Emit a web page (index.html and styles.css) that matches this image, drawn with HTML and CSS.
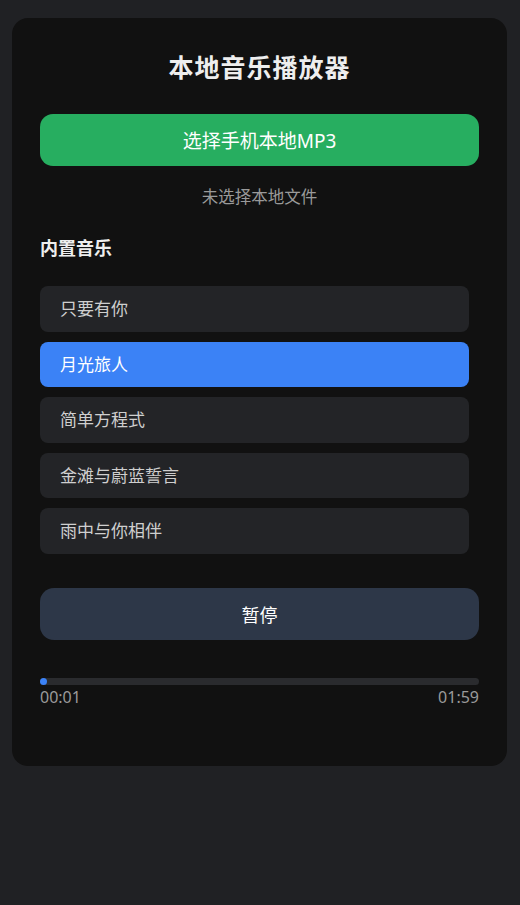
FILE: index.html
```html
<!DOCTYPE html>
<html lang="zh-CN">
<head>
<meta charset="utf-8">
<title>本地音乐播放器</title>
<link rel="stylesheet" href="styles.css">
</head>
<body>
<div class="card">
  <h1 class="title">本地音乐播放器</h1>
  <button class="btn btn-pick">选择手机本地MP3</button>
  <div class="file-name">未选择本地文件</div>
  <h2 class="section">内置音乐</h2>
  <ul class="list">
    <li class="item">只要有你</li>
    <li class="item active">月光旅人</li>
    <li class="item">简单方程式</li>
    <li class="item">金滩与蔚蓝誓言</li>
    <li class="item">雨中与你相伴</li>
  </ul>
  <button class="btn btn-play">暂停</button>
  <div class="progress">
    <div class="track"><div class="thumb"></div></div>
    <div class="times"><span>00:01</span><span>01:59</span></div>
  </div>
</div>
</body>
</html>
```
FILE: styles.css
```css
* { box-sizing: border-box; }
html, body { margin: 0; padding: 0; }
body {
  background: #202124;
  font-family: "Noto Sans", "Noto Sans CJK SC", sans-serif;
  padding: 18px 12px;
  min-height: 905px;
}
.card {
  width: 495px;
  background: #111111;
  border-radius: 16px;
  padding: 28px 28px 28px 28px;
  height: 748px;
}
.title {
  margin: 0;
  height: 42px;
  line-height: 42px;
  text-align: center;
  font-size: 25px;
  letter-spacing: 1px;
  font-weight: 700;
  color: #eeeeee;
}
.btn {
  display: block;
  width: 100%;
  height: 52px;
  border: none;
  font-family: inherit;
  font-size: 18px;
  color: #ffffff;
  border-radius: 13px;
  padding: 0;
}
.btn-pick {
  margin-top: 26px;
  background: #27ae60;
  font-size: 19px;
}
.file-name {
  margin-top: 19px;
  height: 24px;
  line-height: 24px;
  text-align: center;
  font-size: 16.5px;
  color: #9a9a9a;
}
.section {
  margin: 26px 0 0;
  height: 27px;
  line-height: 27px;
  font-size: 18px;
  font-weight: 700;
  color: #eeeeee;
}
.list {
  list-style: none;
  margin: 24px 0 0;
  padding: 0 10px 0 0;
  display: flex;
  flex-direction: column;
  gap: 10px;
}
.item {
  height: 45.6px;
  line-height: 45.6px;
  padding: 0 20px;
  border-radius: 8px;
  background: #232427;
  color: #cfcfcf;
  font-size: 17px;
}
.item.active {
  background: #3b82f6;
  color: #ffffff;
}
.btn-play {
  margin-top: 34px;
  background: #2d3748;
  border-radius: 14px;
}
.progress {
  margin-top: 38px;
}
.track {
  position: relative;
  height: 7px;
  border-radius: 4px;
  background: #2a2b2e;
}
.thumb {
  position: absolute;
  left: 0;
  top: 0;
  width: 7px;
  height: 7px;
  border-radius: 50%;
  background: #3b82f6;
}
.times {
  display: flex;
  justify-content: space-between;
  margin-top: 1px;
  height: 22px;
  line-height: 22px;
  font-size: 16px;
  color: #9a9a9a;
}
```
